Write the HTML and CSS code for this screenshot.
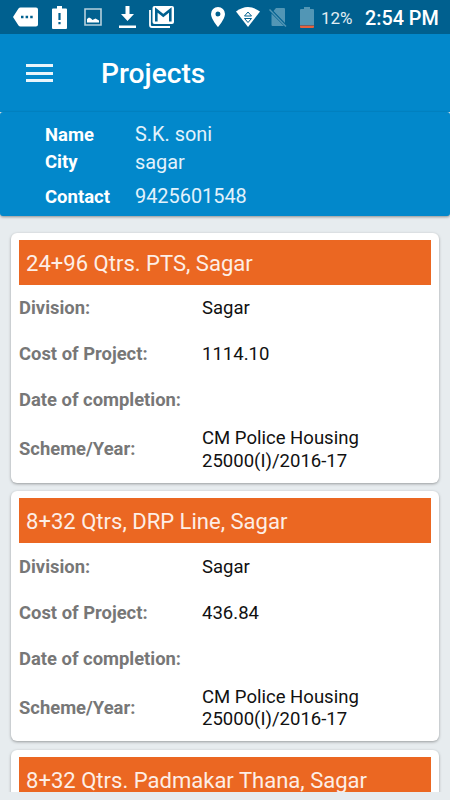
FILE: index.html
```html
<!DOCTYPE html>
<html lang="en">
<head>
  <meta charset="UTF-8">
  <meta name="viewport" content="width=device-width, initial-scale=1">
  <title>Projects</title>
  <link rel="stylesheet" href="styles.css">
</head>
<body>
  <div class="status-bar">
    <div class="notifications">
      <svg width="25" height="20" viewBox="0 0 25 20" fill="#fff">
        <path fill-rule="evenodd" d="M7.500 .5H23a2 2 0 0 1 2 2v15a2 2 0 0 1-2 2H7.500Q6.200 19.500 5.500 18.500L0 10 5.500 1.500Q6.200 .5 7.500 .5zM8 8.800v2.500h2.500v-2.500zm4.600 0v2.500h2.500v-2.500zm4.600 0v2.500h2.500v-2.500z"/>
      </svg>
      <svg class="alert" width="15" height="23" viewBox="0 0 15 23" fill="#fff">
        <path fill-rule="evenodd" d="M5 0h5v2.500h4q1 0 1 1V22q0 1-1 1H1q-1 0-1-1V3.500q0-1 1-1h4zM6.400 7v7h2.200V7zm0 9v2.300h2.200V16z"/>
      </svg>
      <svg class="image" width="18" height="18" viewBox="0 0 18 18">
        <path d="M1 1h16v16H1z" fill="none" stroke="#b5d0dd" stroke-width="1.600"/>
        <path d="M3 14.500v-3.500l2-1.500 2 1 1.500 1.500 3-1.500 3.500 2v2z" fill="#fff"/>
      </svg>
      <svg class="download" width="17" height="22" viewBox="0 0 17 22" fill="#fff">
        <path d="M6.500 0h4v8H15l-6.500 7L2 8h4.500zM0 19.500h17V22H0z"/>
      </svg>
      <svg class="mail" width="25" height="22" viewBox="0 0 25 22" fill="none">
        <path d="M1 4v15q0 2 2 2h18" stroke="#fff" stroke-width="1.800"/>
        <rect x="3.500" y="0" width="21.500" height="18" rx="2" fill="#fff"/>
        <path d="M7.300 15.500V4l7 5.500 7-5.500v11.500" stroke="#00608f" stroke-width="2.600"/>
      </svg>
    </div>
    <div class="system">
      <svg width="14" height="20" viewBox="0 0 14 20" fill="#fff">
        <path fill-rule="evenodd" d="M7 0a7 7 0 0 1 7 7c0 5-7 13-7 13S0 12 0 7a7 7 0 0 1 7-7zm0 4.500a2.500 2.500 0 1 0 0 5 2.500 2.500 0 0 0 0-5z"/>
      </svg>
      <svg class="wifi" width="24" height="20" viewBox="0 0 24 20">
        <path d="M0 4.500Q12-4.500 24 4.500L12 20z" fill="#fff"/>
        <path d="M8.500 9L12 5l3.500 4zM8.500 11.500h7L12 15.500z" fill="none" stroke="#00608f" stroke-width="1"/>
      </svg>
      <svg class="sim" width="18" height="20" viewBox="0 0 18 20">
        <path d="M7 1h8q1 0 1 1v14L4.500 4zM2.500 6.500L15 19H3.500q-1 0-1-1z" fill="#5296b5"/>
        <path d="M.5 2.500l16.500 17" stroke="#5296b5" stroke-width="1.400"/>
      </svg>
      <svg class="battery" width="14" height="21" viewBox="0 0 14 21">
        <path d="M4 0h6v2h3q1 0 1 1v15H0V3q0-1 1-1h3z" fill="#5296b5"/>
        <path d="M0 18.500h14v1.500q0 1-1 1H1q-1 0-1-1z" fill="#e8613c"/>
      </svg>
      <span class="percent">12%</span>
      <span class="clock">2:54 PM</span>
    </div>
  </div>

  <header class="app-bar">
    <button class="menu" aria-label="Menu">
      <span></span>
      <span></span>
      <span></span>
    </button>
    <h1>Projects</h1>
  </header>

  <section class="profile">
    <dl>
      <dt>Name</dt><dd>S.K. soni</dd>
      <dt>City</dt><dd>sagar</dd>
      <dt>Contact</dt><dd>9425601548</dd>
    </dl>
  </section>

  <main class="project-list">
    <article class="card">
      <h2>24+96 Qtrs. PTS, Sagar</h2>
      <dl>
        <dt>Division:</dt><dd>Sagar</dd>
        <dt>Cost of Project:</dt><dd>1114.10</dd>
        <dt>Date of completion:</dt><dd></dd>
        <dt>Scheme/Year:</dt><dd>CM Police Housing 25000(I)/2016-17</dd>
      </dl>
    </article>
    <article class="card">
      <h2>8+32 Qtrs, DRP Line, Sagar</h2>
      <dl>
        <dt>Division:</dt><dd>Sagar</dd>
        <dt>Cost of Project:</dt><dd>436.84</dd>
        <dt>Date of completion:</dt><dd></dd>
        <dt>Scheme/Year:</dt><dd>CM Police Housing 25000(I)/2016-17</dd>
      </dl>
    </article>
    <article class="card">
      <h2>8+32 Qtrs. Padmakar Thana, Sagar</h2>
    </article>
  </main>
</body>
</html>
```

FILE: styles.css
```css
* {
  margin: 0;
  padding: 0;
  box-sizing: border-box;
}

body {
  height: 800px;
  display: flex;
  flex-direction: column;
  overflow: hidden;
  background: #e7ecef;
  font-family: Roboto, sans-serif;
}

/* status bar */
.status-bar {
  flex: none;
  height: 34px;
  padding: 0 10px 0 13px;
  display: flex;
  justify-content: space-between;
  background: #00608f;
  color: #fff;
}

.notifications,
.system {
  display: flex;
  align-items: center;
}

.alert {
  margin-left: 14px;
}

.image {
  margin-left: 17px;
}

.download {
  margin-left: 17px;
}

.mail {
  margin-left: 13px;
}

.wifi {
  margin-left: 11px;
}

.sim {
  margin-left: 9px;
}

.battery {
  margin-left: 13px;
}

.percent {
  width: 44px;
  margin-left: 7px;
  padding-top: 1px;
  font-size: 17px;
  color: #e0edf3;
}

.clock {
  width: 75px;
  padding-top: 2px;
  font-size: 19.800px;
  font-weight: 500;
  white-space: nowrap;
}

/* app bar */
.app-bar {
  flex: none;
  height: 78px;
  padding-left: 26px;
  display: flex;
  align-items: center;
  background: #0288cb;
  color: #fff;
}

.menu {
  width: 27px;
  display: flex;
  flex-direction: column;
  gap: 4.500px;
  border: none;
  background: none;
}

.menu span {
  height: 3px;
  background: #e9f5fb;
}

h1 {
  margin-left: 48px;
  padding-top: 1px;
  font-size: 28.200px;
  font-weight: 500;
}

/* profile */
.profile {
  flex: none;
  height: 104px;
  padding: 8px 45px 0;
  background: #0288cb;
  border-radius: 3px;
  box-shadow: 0 1px 3px rgba(0, 0, 0, 0.4);
  color: #fff;
}

.profile dl {
  display: grid;
  grid-template-columns: 90px 1fr;
  grid-template-rows: 29px 26px 43px;
  align-items: center;
}

.profile dt {
  font-size: 18.500px;
  font-weight: 700;
}

.profile dd {
  font-size: 19.900px;
  color: #e2f2fb;
}

/* project cards */
.project-list {
  height: 576px;
  padding: 16.500px 11px 0;
  display: flex;
  flex-direction: column;
  gap: 8.500px;
  overflow: hidden;
}

.card {
  flex: none;
  height: 250px;
  padding: 7px 8px;
  background: #fff;
  border-radius: 6px;
  box-shadow: 0 1px 3px rgba(0, 0, 0, 0.35);
}

.card h2 {
  height: 45px;
  padding-left: 7px;
  line-height: 47px;
  background: #eb6722;
  color: #fdeee6;
  font-size: 22.050px;
  font-weight: 400;
  white-space: nowrap;
}

.card dl {
  padding-top: 1px;
  display: grid;
  grid-template-columns: 183px 180px;
  grid-template-rows: 46px 46px 46px 52px;
  align-items: center;
  line-height: 22.500px;
}

.card dt {
  color: #777;
  font-size: 18.400px;
  font-weight: 700;
}

.card dd {
  color: #111;
  font-size: 18.550px;
}
```
